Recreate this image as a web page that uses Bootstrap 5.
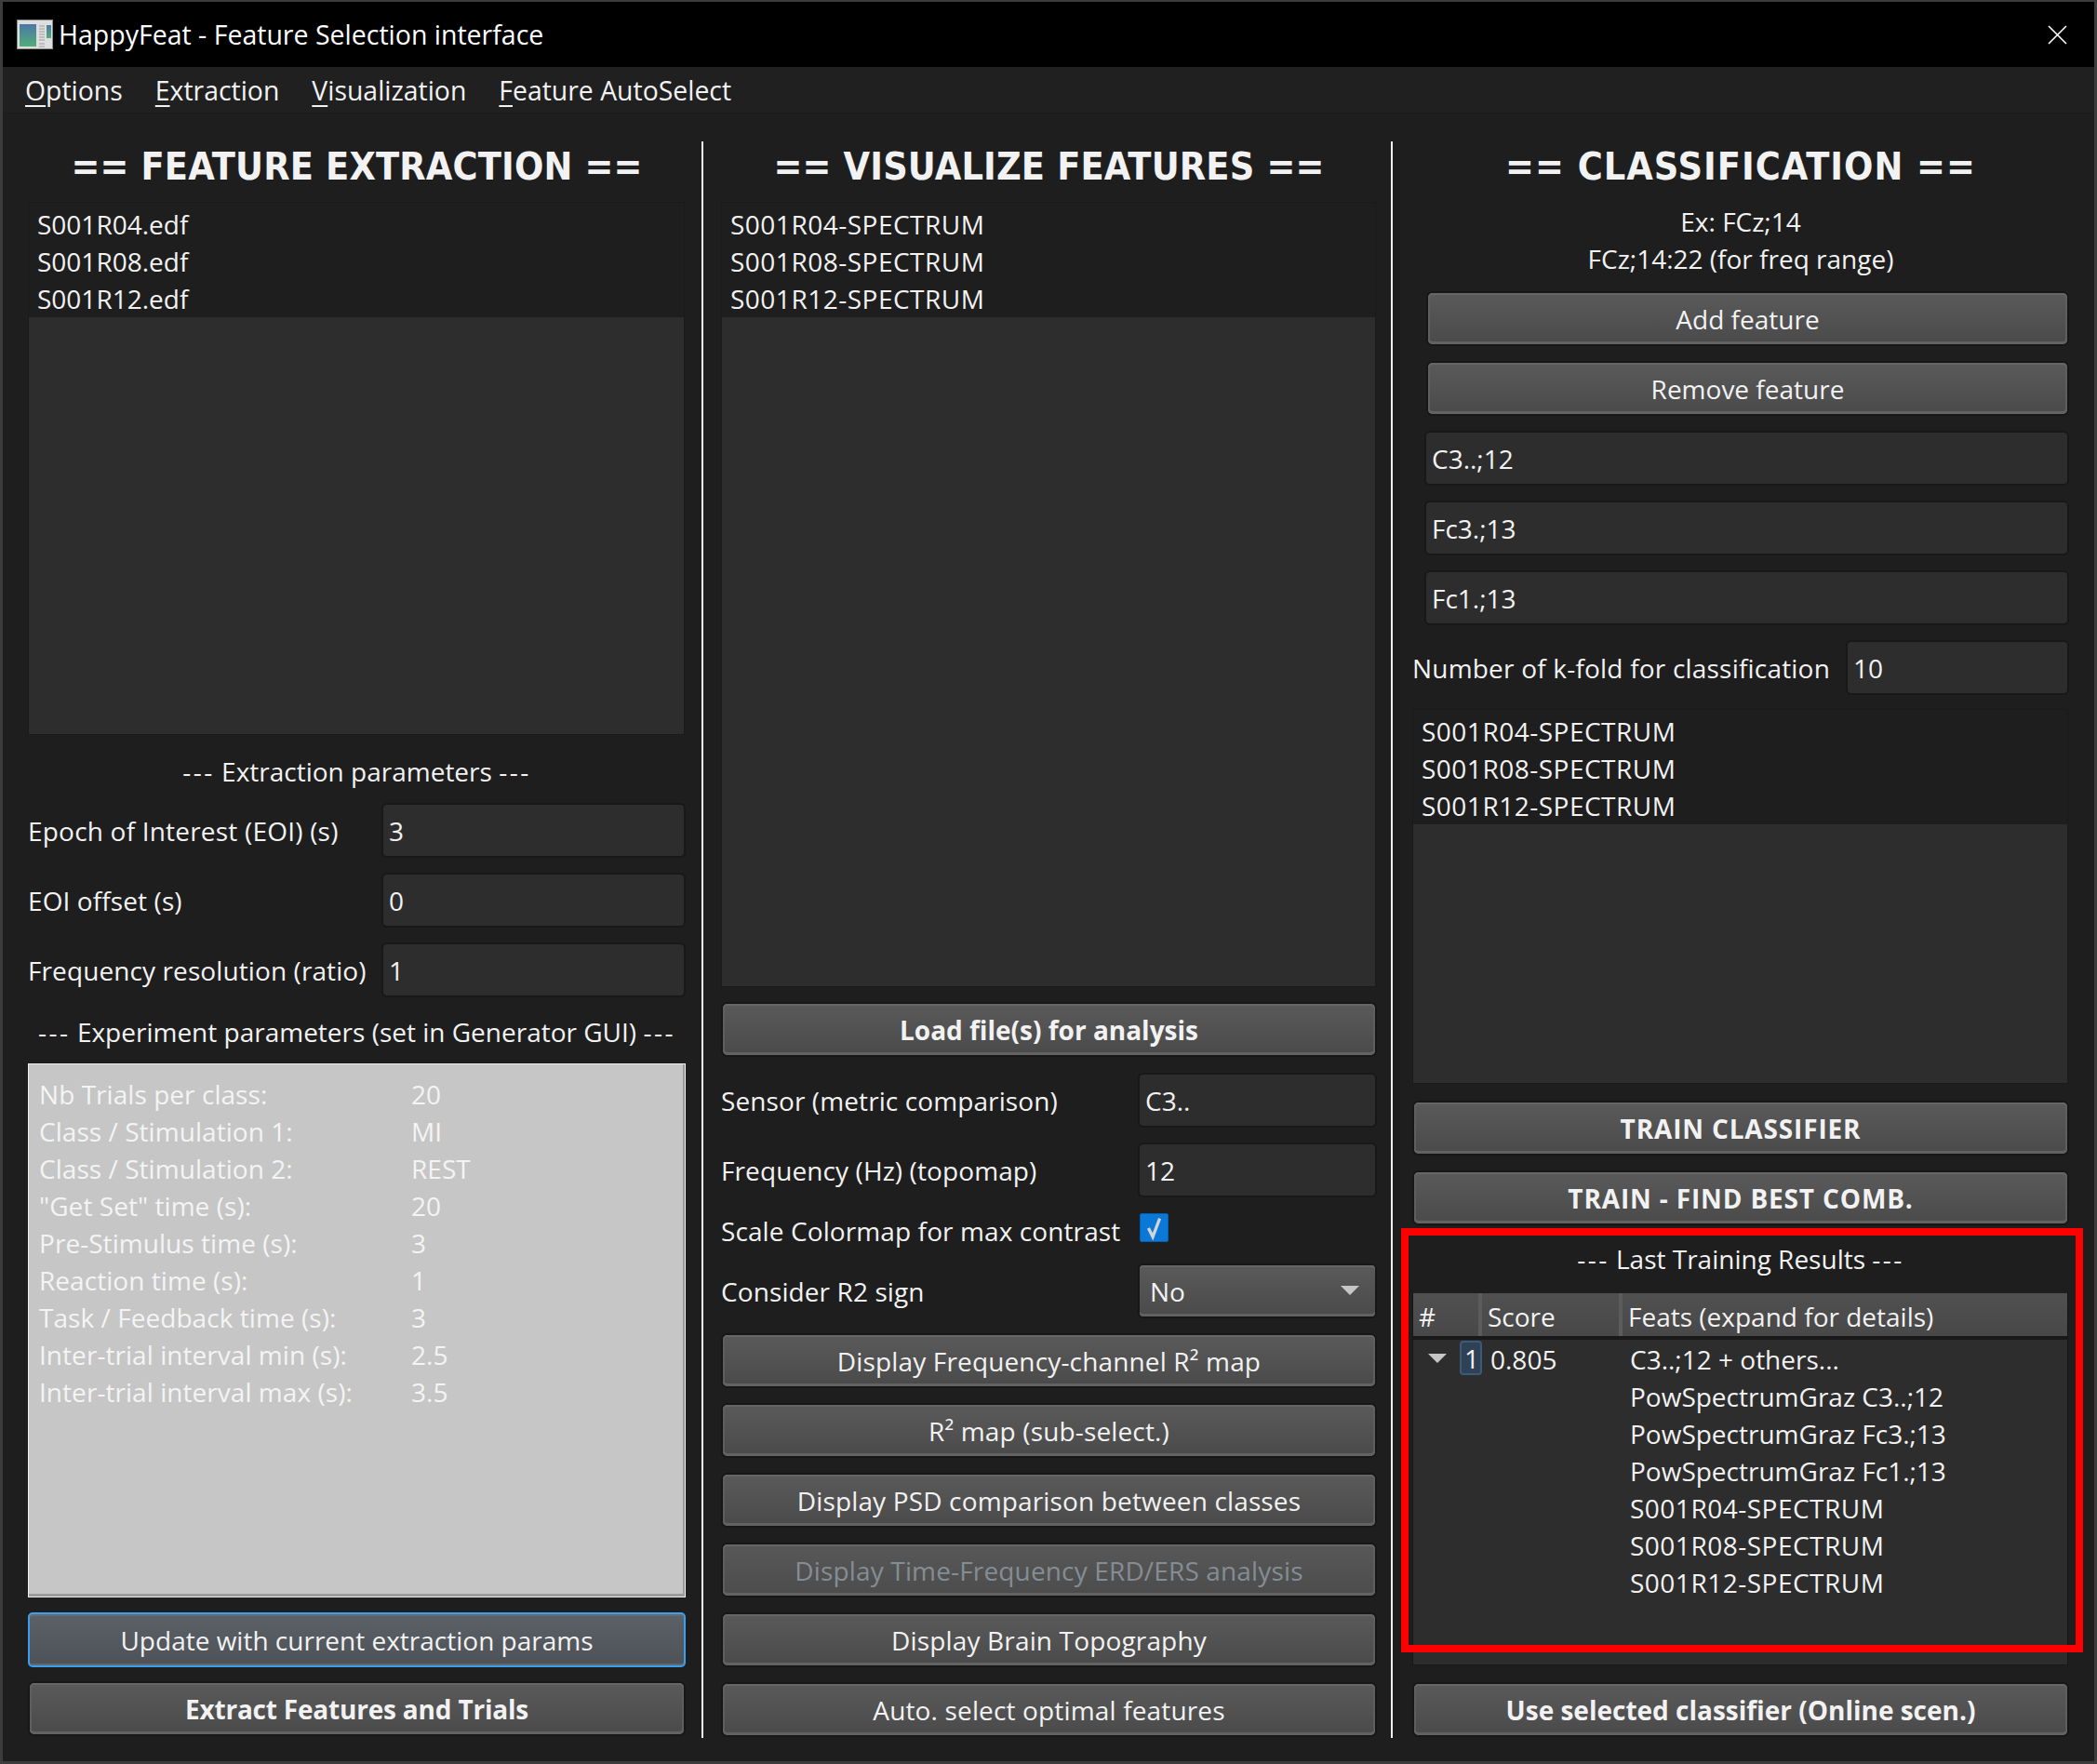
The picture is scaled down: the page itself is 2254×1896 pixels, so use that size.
<!DOCTYPE html>
<html lang="en">
<head>
<meta charset="UTF-8">
<title>HappyFeat - Feature Selection interface</title>
<link href="https://cdn.jsdelivr.net/npm/bootstrap@5.3.0/dist/css/bootstrap.min.css" rel="stylesheet">
<style>
    html, body { margin: 0; background: #1e1e1e; }
    body { width: 2254px; height: 1896px; overflow: hidden; font-family: "Open Sans", sans-serif; font-size: 28px; color: #f2f2f2; }
    .hf-window { width: 2254px; height: 1896px; border: solid #3c3c3c; border-width: 2px 3px 3px 3px; background: #1e1e1e; display: flex; flex-direction: column; }
    .hf-title { height: 70px; background: #000; color: #fff; padding-left: 15px; padding-right: 29px; gap: 6px; flex: none; font-size: 28.5px; }
    .hf-title svg { flex: none; }
    .hf-menu { height: 50px; background: #202020; padding-left: 24px; padding-top: 2px; gap: 35px; flex: none; border-bottom: 1px solid #1b1b1b; font-size: 28.4px; }
    .hf-menu a { color: #f2f2f2; text-decoration: none; padding: 0; }
    .hf-menu u { text-underline-offset: 5px; }
    .hf-main { flex: 1; display: flex; padding-top: 30px; padding-left: 27px; }
    .hf-col { display: flex; flex-direction: column; height: 1716px; flex: none; }
    .hf-col > * { flex: none; }
    .hf-col1 { width: 707px; }
    .hf-col2 { width: 705px; }
    .hf-col3 { width: 720px; padding-left: 14px; position: relative; }
    .hf-sep { width: 2px; height: 1716px; background: #f0f0f0; flex: none; margin-left: 17px; margin-right: 19px; }
    .hf-sep2 { margin-left: 15px; margin-right: 7px; }
    .hf-head { height: 65px; font-family: "DejaVu Sans Condensed", "DejaVu Sans", sans-serif; font-weight: 700; font-size: 41px; letter-spacing: .15px; text-align: center; line-height: 54px; white-space: nowrap; }
    .hf-col3 .hf-head { letter-spacing: 1px; }
    .hf-files { border-radius: 0; background: #2d2d2d; border: 1px solid #1a1a1a; display: block; padding-top: 3px; background-image: linear-gradient(#1e1e1e, #1e1e1e); background-size: 100% 3px; background-repeat: no-repeat; }
    .hf-files .list-group-item { background: #1e1e1e; color: #f2f2f2; border: 0; padding: 0 0 0 9px; height: 40px; line-height: 40px; border-radius: 0; }
    .hf-h1 { height: 573px; width: 706px; }
    .hf-h2 { height: 844px; margin-bottom: 18px; width: 704px; }
    .hf-h3 { height: 403px; margin-bottom: 20px; width: 705px; }
    .hf-caps { letter-spacing: .5px; }
    .hf-note { text-align: center; height: 40px; line-height: 38px; white-space: nowrap; }
    .hf-dash { letter-spacing: 2.5px; }
    .hf-line { display: flex; align-items: center; height: 55px; margin-bottom: 20px; white-space: nowrap; }
    .hf-line label { flex: 1; letter-spacing: .1px; }
    .hf-line label.hf-spread { letter-spacing: .2px; }
    .hf-checkline { height: 31px; margin-top: -1px; margin-bottom: 25px; align-items: flex-start; }
    .hf-checkline label { line-height: 38px; }
    .form-control.hf-input, .form-select.hf-combo { height: 55px; padding: 0 0 0 6px; margin-right: 2px; background-color: #2d2d2d; color: #f2f2f2; border: 0; border-radius: 4px; font-size: 28px; box-shadow: 0 0 0 2px #181818; }
    .hf-indent { padding-left: 15px; }
    .hf-w323 { width: 323px; flex: none; }
    .hf-w253 { width: 253px; flex: none; }
    .hf-wcombo { width: 255px; flex: none; }
    .hf-w235 { width: 236px; flex: none; }
    .btn.hf-btn { display: block; width: calc(100% - 4px); margin: 0 2px 20px 2px; height: 55px; padding: 0; color: #f2f2f2; font-size: 28px; border: 0; border-radius: 5px; background: linear-gradient(#5a5a5a, #4a4a4a); box-shadow: 0 0 0 2px #171717, inset 0 2px 0 #666, inset 0 -3px 0 #626262, inset 2px 0 0 #5e5e5e, inset -2px 0 0 #5e5e5e; white-space: nowrap; }
    .btn.hf-btn.hf-bold { font-weight: 700; }
    .hf-col2 .btn.hf-btn:not(.hf-bold) { letter-spacing: .15px; }
    .btn.hf-btn.hf-tight { letter-spacing: -.2px; }
    .btn.hf-btn.hf-wide { letter-spacing: .85px; }
    .btn.hf-btn.hf-after-load { margin-bottom: 21px; }
    .btn.hf-btn.hf-off { color: #858d94; background: linear-gradient(#585858, #4c4c4c); opacity: 1; }
    .btn.hf-btn.hf-focus { width: 707px; height: 59px; margin: 0 0 17px 0; border: 2px solid #3a9ff0; background: linear-gradient(#5b6168, #4e5257); box-shadow: inset 0 2px 0 #666b70, inset 0 -2px 0 #62676c; }
    .hf-greybox { width: 707px; height: 574px; margin-bottom: 16px; background: #c6c6c6; color: #f4f4f4; border: 1px solid #f0f0f0; box-shadow: inset -2px -3px 0 #9b9b9b; padding: 12px 11px; letter-spacing: .05px; }
    .hf-greybox div { display: flex; height: 40px; line-height: 40px; }
    .hf-greybox span:first-child { width: 400px; flex: none; }
    .hf-check { width: 31px; height: 31px; background: #0a78d7; border: 1px solid #0a5fa8; border-radius: 2px; display: block; }
    .hf-combo-wrap { position: relative; }
    .form-select.hf-combo { width: 253px; background-image: none; background: linear-gradient(#5a5a5a, #4a4a4a); padding-left: 11px; box-shadow: 0 0 0 2px #171717, inset 0 2px 0 #666, inset 0 -3px 0 #626262; }
    .hf-arrow { position: absolute; right: 19px; top: 22px; width: 0; height: 0; border-left: 10px solid transparent; border-right: 10px solid transparent; border-top: 10px solid #c6c6c6; }
    .hf-tree { height: 400px; width: 705px; background: #2d2d2d; border: 1px solid #161616; border-top: 0; display: flex; flex-direction: column; }
    .hf-thead { height: 50px; flex: none; background: linear-gradient(#505050, #484848); display: flex; border-bottom: 4px solid #191919; }
    .hf-thead div { line-height: 50px; padding-left: 6px; border-right: 4px solid #5c5c5c; }
    .hf-c1 { width: 74px; flex: none; }
    .hf-thead .hf-c2 { width: 151px; flex: none; padding-left: 6px; }
    .hf-thead .hf-c3 { border: 0; flex: 1; padding-left: 6px; }
    .hf-trow { display: flex; height: 40px; line-height: 40px; flex: none; }
    .hf-trow:nth-child(2) { margin-top: 1px; }
    .hf-tcell { width: 222px; flex: none; display: flex; position: relative; }
    .hf-tri { width: 0; height: 0; border-left: 10px solid transparent; border-right: 10px solid transparent; border-top: 10px solid #c6c6c6; margin: 14px 0 0 16px; }
    .hf-idx { position: absolute; left: 50px; top: 0; width: 24px; height: 37px; line-height: 35px; text-align: right; background: #2e4156; border: 2px solid #3c5a78; border-radius: 4px; padding-right: 1px; }
    .hf-score { position: absolute; left: 83px; }
    .hf-tval { padding-left: 11px; white-space: nowrap; }
    .hf-redbox { position: absolute; left: 2px; top: 1168px; width: 733px; height: 456px; border: 8px solid #f00; pointer-events: none; }
</style>
</head>
<body>
<div class="hf-window">
    <div class="hf-title d-flex align-items-center">
        <svg width="39" height="32" viewBox="0 0 39 32">
            <defs>
                <linearGradient id="hfPane" x1="0" y1="0" x2="0" y2="1"><stop offset="0" stop-color="#4a78a8"/><stop offset="1" stop-color="#52ad78"/></linearGradient>
            </defs>
            <rect width="39" height="32" fill="#8c8c8c"/>
            <rect x="1" y="1" width="37" height="30" fill="#dedede"/>
            <rect x="3" y="5" width="18" height="24" fill="url(#hfPane)"/>
            <path d="M24 7h6M24 10h6M24 13h6M24 16h6M24 19h6M24 22h6M24 26h6M24 29h6" stroke="#b4b4b4" stroke-width="1.5"/>
            <rect x="32" y="6" width="5" height="14" fill="url(#hfPane)"/>
        </svg>
        <span class="flex-grow-1">HappyFeat - Feature Selection interface</span>
        <svg width="21" height="21" viewBox="0 0 21 21"><path d="M1 1L20 20M20 1L1 20" stroke="#fff" stroke-width="1.6" fill="none"/></svg>
    </div>
    <nav class="nav hf-menu align-items-center">
        <a class="nav-link" href="#"><u>O</u>ptions</a>
        <a class="nav-link" href="#"><u>E</u>xtraction</a>
        <a class="nav-link" href="#"><u>V</u>isualization</a>
        <a class="nav-link" href="#"><u>F</u>eature AutoSelect</a>
    </nav>
    <div class="hf-main">
        <div class="hf-col hf-col1">
            <div class="hf-head">== FEATURE EXTRACTION ==</div>
            <div class="list-group hf-files hf-h1">
                <div class="list-group-item">S001R04.edf</div>
                <div class="list-group-item">S001R08.edf</div>
                <div class="list-group-item">S001R12.edf</div>
            </div>
            <div class="hf-note" style="margin-top:20px;margin-bottom:15px"><span class="hf-dash">---</span> Extraction parameters <span class="hf-dash">---</span></div>
            <div class="hf-line"><label class="hf-spread">Epoch of Interest (EOI) (s)</label><input class="form-control hf-input hf-w323" value="3"></div>
            <div class="hf-line"><label>EOI offset (s)</label><input class="form-control hf-input hf-w323" value="0"></div>
            <div class="hf-line"><label>Frequency resolution (ratio)</label><input class="form-control hf-input hf-w323" value="1"></div>
            <div class="hf-note" style="margin-bottom:13px"><span class="hf-dash">---</span> Experiment parameters (set in Generator GUI) <span class="hf-dash">---</span></div>
            <div class="hf-greybox">
                <div><span>Nb Trials per class:</span><span>20</span></div>
                <div><span>Class / Stimulation 1:</span><span>MI</span></div>
                <div><span>Class / Stimulation 2:</span><span>REST</span></div>
                <div><span>"Get Set" time (s):</span><span>20</span></div>
                <div><span>Pre-Stimulus time (s):</span><span>3</span></div>
                <div><span>Reaction time (s):</span><span>1</span></div>
                <div><span>Task / Feedback time (s):</span><span>3</span></div>
                <div><span>Inter-trial interval min (s):</span><span>2.5</span></div>
                <div><span>Inter-trial interval max (s):</span><span>3.5</span></div>
            </div>
            <button class="btn hf-btn hf-focus">Update with current extraction params</button>
            <button class="btn hf-btn hf-bold hf-tight">Extract Features and Trials</button>
        </div>
        <div class="hf-sep"></div>
        <div class="hf-col hf-col2">
            <div class="hf-head">== VISUALIZE FEATURES ==</div>
            <div class="list-group hf-files hf-h2">
                <div class="list-group-item hf-caps">S001R04-SPECTRUM</div>
                <div class="list-group-item hf-caps">S001R08-SPECTRUM</div>
                <div class="list-group-item hf-caps">S001R12-SPECTRUM</div>
            </div>
            <button class="btn hf-btn hf-bold hf-after-load">Load file(s) for analysis</button>
            <div class="hf-line"><label>Sensor (metric comparison)</label><input class="form-control hf-input hf-w253" value="C3.."></div>
            <div class="hf-line"><label>Frequency (Hz) (topomap)</label><input class="form-control hf-input hf-w253" value="12"></div>
            <div class="hf-line hf-checkline"><label>Scale Colormap for max contrast</label>
                <div class="hf-wcombo"><svg class="hf-check" viewBox="0 0 31 31"><path d="M9 16L14 26L22 5" stroke="#d4d4d4" stroke-width="3.5" fill="none"/></svg></div>
            </div>
            <div class="hf-line"><label>Consider R2 sign</label>
                <div class="hf-combo-wrap hf-wcombo"><select class="form-select hf-combo"><option>No</option></select><span class="hf-arrow"></span></div>
            </div>
            <button class="btn hf-btn">Display Frequency-channel R² map</button>
            <button class="btn hf-btn">R² map (sub-select.)</button>
            <button class="btn hf-btn">Display PSD comparison between classes</button>
            <button class="btn hf-btn hf-off" disabled>Display Time-Frequency ERD/ERS analysis</button>
            <button class="btn hf-btn">Display Brain Topography</button>
            <button class="btn hf-btn">Auto. select optimal features</button>
        </div>
        <div class="hf-sep hf-sep2"></div>
        <div class="hf-col hf-col3">
            <div class="hf-head">== CLASSIFICATION ==</div>
            <div class="hf-note" style="margin-top:2px">Ex: FCz;14</div>
            <div class="hf-note mb-3">FCz;14:22 (for freq range)</div>
            <div class="hf-indent">
                <button class="btn hf-btn">Add feature</button>
                <button class="btn hf-btn">Remove feature</button>
                <div class="hf-line"><input class="form-control hf-input" value="C3..;12"></div>
                <div class="hf-line"><input class="form-control hf-input" value="Fc3.;13"></div>
                <div class="hf-line"><input class="form-control hf-input" value="Fc1.;13"></div>
            </div>
            <div class="hf-line" style="margin-bottom:17px"><label class="hf-spread">Number of k-fold for classification</label><input class="form-control hf-input hf-w235" value="10"></div>
            <div class="list-group hf-files hf-h3">
                <div class="list-group-item hf-caps">S001R04-SPECTRUM</div>
                <div class="list-group-item hf-caps">S001R08-SPECTRUM</div>
                <div class="list-group-item hf-caps">S001R12-SPECTRUM</div>
            </div>
            <button class="btn hf-btn hf-bold hf-wide">TRAIN CLASSIFIER</button>
            <button class="btn hf-btn hf-bold hf-wide">TRAIN - FIND BEST COMB.</button>
            <div class="hf-note" style="margin-top:-1px;margin-bottom:16px"><span class="hf-dash">---</span> Last Training Results <span class="hf-dash">---</span></div>
            <div class="hf-tree">
                <div class="hf-thead">
                    <div class="hf-c1">#</div>
                    <div class="hf-c2">Score</div>
                    <div class="hf-c3">Feats (expand for details)</div>
                </div>
                <div class="hf-trow"><div class="hf-tcell"><span class="hf-tri"></span><span class="hf-idx">1</span><span class="hf-score">0.805</span></div><div class="hf-tval">C3..;12 + others...</div></div>
                <div class="hf-trow"><div class="hf-tcell"></div><div class="hf-tval">PowSpectrumGraz C3..;12</div></div>
                <div class="hf-trow"><div class="hf-tcell"></div><div class="hf-tval">PowSpectrumGraz Fc3.;13</div></div>
                <div class="hf-trow"><div class="hf-tcell"></div><div class="hf-tval">PowSpectrumGraz Fc1.;13</div></div>
                <div class="hf-trow"><div class="hf-tcell"></div><div class="hf-tval hf-caps">S001R04-SPECTRUM</div></div>
                <div class="hf-trow"><div class="hf-tcell"></div><div class="hf-tval hf-caps">S001R08-SPECTRUM</div></div>
                <div class="hf-trow"><div class="hf-tcell"></div><div class="hf-tval hf-caps">S001R12-SPECTRUM</div></div>
            </div>
            <button class="btn hf-btn hf-bold" style="margin-top:20px">Use selected classifier (Online scen.)</button>
            <div class="hf-redbox"></div>
        </div>
    </div>
</div>
<script src="https://cdn.jsdelivr.net/npm/bootstrap@5.3.0/dist/js/bootstrap.bundle.min.js"></script>
</body>
</html>
